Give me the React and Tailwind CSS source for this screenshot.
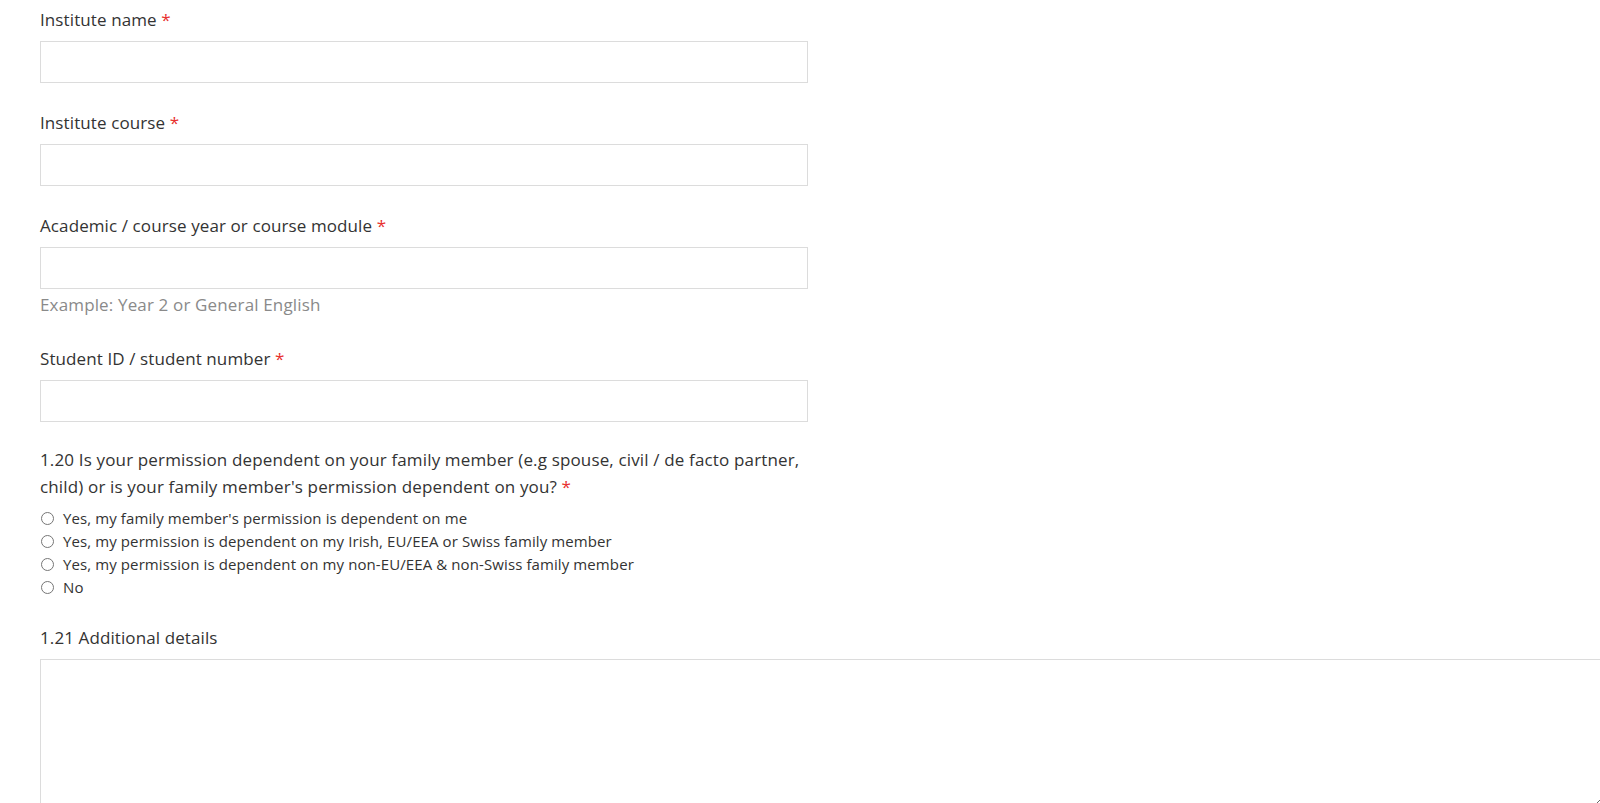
import React from 'react'

const font = { fontFamily: '"Open Sans", "Noto Sans", Arial, sans-serif' }

function Label({ children, required, className = '' }) {
  return (
    <div className={`text-[17px] leading-[24px] tracking-[0.1px] text-[#333333] ${className}`}>
      {children}
      {required && <span className="text-[#e8302e]"> *</span>}
    </div>
  )
}

function TextField({ label, hint }) {
  return (
    <div className="mb-[28px]">
      <Label required className="mb-[9px]">{label}</Label>
      <input type="text" className="block w-[768px] h-[42px] border border-[#dcdcdc] bg-white outline-none" />
      {hint && <div className="mt-[5px] pb-[3px] text-[17px] leading-[22px] tracking-[0.15px] text-[#8a8a8a]">{hint}</div>}
    </div>
  )
}

const options = [
  "Yes, my family member's permission is dependent on me",
  'Yes, my permission is dependent on my Irish, EU/EEA or Swiss family member',
  'Yes, my permission is dependent on my non-EU/EEA & non-Swiss family member',
  'No',
]

export default function App() {
  return (
    <div className="w-full h-[803px] overflow-hidden bg-white" style={font}>
      <div className="pl-[40px] pt-[8px]">
        <TextField label="Institute name" />
        <TextField label="Institute course" />
        <TextField label="Academic / course year or course module" hint="Example: Year 2 or General English" />
        <div className="mb-[24px]">
          <Label required className="mb-[9px]">Student ID / student number</Label>
          <input type="text" className="block w-[768px] h-[42px] border border-[#dcdcdc] bg-white outline-none" />
        </div>

        {/* 1.20 question */}
        <div className="w-[768px] text-[17px] leading-[27px] tracking-[0.15px] text-[#333333]">
          1.20 Is your permission dependent on your family member (e.g spouse, civil / de facto partner, child) or is your family member's permission dependent on you?
          <span className="text-[#e8302e]"> *</span>
        </div>
        <div className="mt-[7px] flex flex-col">
          {options.map((o) => (
            <label key={o} className="flex items-center h-[23px] text-[15px] tracking-[0.1px] text-[#333333]">
              <span className="w-[13px] h-[13px] rounded-full border border-[#767676] bg-white shrink-0 ml-[1px]" />
              <span className="ml-[9px]">{o}</span>
            </label>
          ))}
        </div>

        {/* 1.21 */}
        <Label className="mt-[27px] mb-[9px]">1.21 Additional details</Label>
        <textarea className="block w-[1562px] h-[150px] border border-[#dcdcdc] bg-white outline-none" />
      </div>
    </div>
  )
}
